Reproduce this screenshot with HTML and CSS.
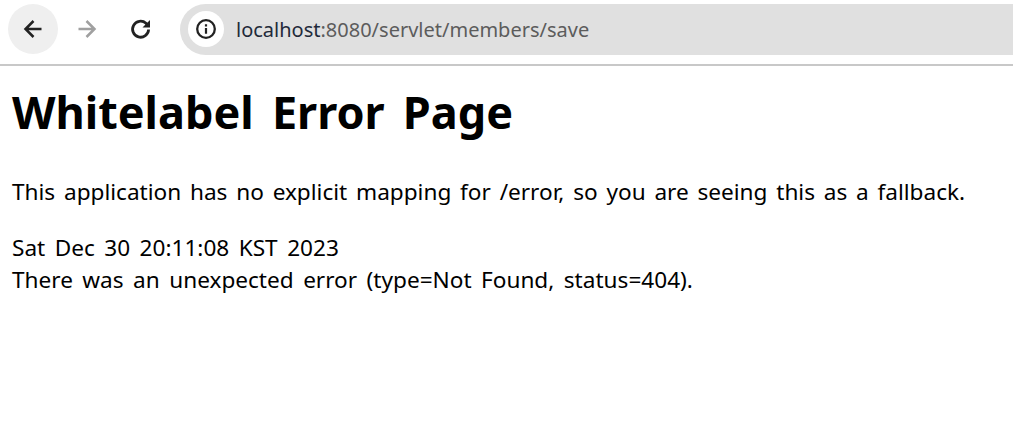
FILE: index.html
```html
<!DOCTYPE html>
<html lang="en">
<head>
    <meta charset="UTF-8">
    <title>Whitelabel Error Page</title>
    <link rel="stylesheet" href="styles.css">
</head>
<body>
    <div class="toolbar">
        <div class="nav-btn nav-btn-active">
            <svg width="24" height="24" viewBox="0 0 24 24"><path d="M20.5 12H5M12.5 4 4.5 12l8 8" fill="none" stroke="#222" stroke-width="2.5"/></svg>
        </div>
        <div class="nav-btn">
            <svg width="24" height="24" viewBox="0 0 24 24"><path d="M3.5 12H19M11.5 4l8 8-8 8" fill="none" stroke="#a0a0a0" stroke-width="2.5"/></svg>
        </div>
        <div class="nav-btn">
            <svg width="24" height="24" viewBox="0 0 24 24"><path d="M19.6 12.5A8 8 0 1 1 17 6.3L19 8.5" fill="none" stroke="#222" stroke-width="2.8"/><path d="M21 3v7.5h-7.5z" fill="#222"/></svg>
        </div>
        <div class="address-bar">
            <div class="site-info">
                <svg width="22" height="22" viewBox="0 0 22 22"><circle cx="11" cy="11" r="8.8" fill="none" stroke="#222" stroke-width="2.3"/><path d="M9.9 10h2.2v5.7H9.9zM9.9 6.3h2.2v2.2H9.9z" fill="#222"/></svg>
            </div>
            <span class="url"><span class="url-host">localhost</span>:8080/servlet/members/save</span>
        </div>
    </div>
    <div class="page">
        <h1>Whitelabel Error Page</h1>
        <p>This application has no explicit mapping for /error, so you are seeing this as a fallback.</p>
        <div class="detail" id="created">Sat Dec 30 20:11:08 KST 2023</div>
        <div class="detail">There was an unexpected error (type=Not Found, status=404).</div>
    </div>
</body>
</html>
```

FILE: styles.css
```css
* {
    margin: 0;
    padding: 0;
    box-sizing: border-box;
}

html, body {
    width: 100%;
    height: 100%;
    overflow: hidden;
    background: #fff;
}

body {
    font-family: "Noto Sans", "Noto Sans CJK KR", sans-serif;
    color: #000;
}

.toolbar {
    display: flex;
    align-items: center;
    height: 66px;
    padding: 4px 0 10px 8px;
    border-bottom: 2px solid #c8c8c8;
}

.nav-btn {
    display: flex;
    align-items: center;
    justify-content: center;
    width: 50px;
    height: 50px;
    margin-right: 4px;
    border-radius: 50%;
}

.nav-btn-active {
    background: #efefef;
}

.address-bar {
    display: flex;
    align-items: center;
    flex: 1;
    height: 51px;
    margin-left: 10px;
    padding-left: 8px;
    border-radius: 26px 0 0 26px;
    background: #e0e0e0;
}

.site-info {
    display: flex;
    align-items: center;
    justify-content: center;
    width: 36px;
    height: 36px;
    margin-right: 12px;
    border-radius: 50%;
    background: #fff;
}

.url {
    font-size: 20px;
    color: #5c5c5c;
}

.url-host {
    color: #1f2a3a;
}

.page {
    padding: 0 12px;
    font-size: 22.6px;
    line-height: 32px;
    word-spacing: 2.9px;
}

h1 {
    margin-top: 15px;
    font-size: 45px;
    line-height: 62px;
    font-weight: 700;
    word-spacing: 6.5px;
}

p {
    margin: 33px 0 24px;
}

.detail {
    word-spacing: 3.6px;
}
```
